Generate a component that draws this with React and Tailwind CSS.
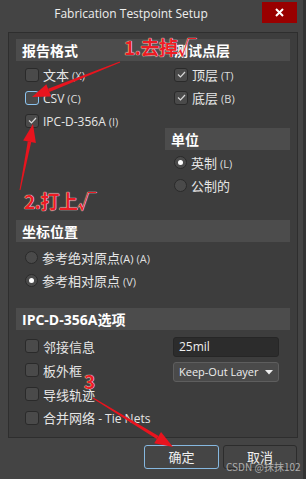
import React from "react";

const CJK = { fontFamily: '"Noto Sans CJK SC", "Noto Sans", sans-serif' };
const LAT = { fontFamily: '"Open Sans", "Noto Sans CJK SC", sans-serif' };

function Check({ checked, focus }) {
  return (
    <span
      className={
        "flex items-center justify-center w-[14px] h-[14px] rounded-[3px] bg-[#4a4a4a] border " +
        (focus ? "border-[#8cc4f0]" : "border-[#2a2a2a]")
      }
    >
      {checked && (
        <svg width="9" height="7" viewBox="0 0 9 7">
          <path d="M1 3.5 L3.5 6 L8 1" fill="none" stroke="#d8d8d8" strokeWidth="1.2" />
        </svg>
      )}
    </span>
  );
}

function Radio({ on }) {
  return (
    <span className="flex items-center justify-center w-[13px] h-[13px] rounded-full bg-[#4a4a4a] border border-[#2a2a2a]">
      {on && <span className="w-[5px] h-[5px] rounded-full bg-white" />}
    </span>
  );
}

function Row({ children, control, className = "" }) {
  return (
    <div className={"flex items-center h-[23px] gap-[4px] " + className}>
      {control}
      <span className="text-[13px] text-[#e6e6e6] leading-none whitespace-nowrap" style={CJK}>
        {children}
      </span>
    </div>
  );
}

function Key({ k }) {
  return (
    <span className="text-[11px] text-[#dcdcdc] ml-[3px]" style={LAT}>
      ({k})
    </span>
  );
}

function Header({ children, className = "" }) {
  return (
    <div
      className={"h-[22px] bg-[#4c4c4c] flex items-center pl-[6px] text-[14px] font-bold text-white " + className}
      style={CJK}
    >
      {children}
    </div>
  );
}

function Arrow({ x1, y1, x2, y2, head = 18, hw = 6.5, w = 3.5 }) {
  const dx = x2 - x1;
  const dy = y2 - y1;
  const L = Math.hypot(dx, dy);
  const ux = dx / L;
  const uy = dy / L;
  const px = -uy;
  const py = ux;
  const bx = x2 - ux * head;
  const by = y2 - uy * head;
  const shaft = [
    [x1 + px * 0.5, y1 + py * 0.5],
    [bx + px * (w / 2), by + py * (w / 2)],
    [bx - px * (w / 2), by - py * (w / 2)],
    [x1 - px * 0.5, y1 - py * 0.5],
  ];
  const tri = [
    [x2, y2],
    [bx + px * hw, by + py * hw],
    [bx - px * hw, by - py * hw],
  ];
  const s = (a) => a.map((p) => p.join(",")).join(" ");
  return (
    <g fill="#e8141e">
      <polygon points={s(shaft)} />
      <polygon points={s(tri)} />
    </g>
  );
}

const annot = {
  fontFamily: '"Noto Sans CJK SC", "Noto Sans", sans-serif',
  color: "#ec1c24",
  textShadow: "0 0 1px #fff, 0 0 1px #fff",
};

export default function App() {
  return (
    <div className="relative w-[306px] h-[479px] bg-[#444444] overflow-hidden flex flex-col border-r-[3px] border-[#333]">
      {/* title bar */}
      <div className="relative h-[32px] flex items-start">
        <div className="flex-1 h-[27px] flex items-center justify-center">
          <span className="text-[12px] text-[#eeeeee] whitespace-nowrap" style={LAT}>
            Fabrication Testpoint Setup
          </span>
        </div>
        <div className="mt-[2px] mr-[6px] w-[35px] h-[21px] bg-[#990000] flex items-center justify-center">
          <svg width="9" height="9" viewBox="0 0 9 9">
            <path d="M1 1 L8 8 M8 1 L1 8" stroke="#fff" strokeWidth="2" />
          </svg>
        </div>
      </div>

      {/* panel */}
      <div className="mx-[8px] w-[290px] h-[406px] border border-[#2e2e2e] bg-[#3d3d3d] pt-[6px] px-[7px] flex flex-col">
        <Header>
          报告格式
          <span className="ml-[96px]">测试点层</span>
        </Header>
        <div className="flex">
          <div className="w-[149px] pl-[9px] pt-[2px] flex flex-col">
            <Row control={<Check />}>
              文本<Key k="X" />
            </Row>
            <Row control={<Check focus />}>
              <span style={LAT} className="text-[12px]">CSV</span>
              <Key k="C" />
            </Row>
            <Row control={<Check checked />}>
              <span style={LAT} className="text-[12px]">IPC-D-356A</span>
              <Key k="I" />
            </Row>
          </div>
          <div className="flex-1 pt-[2px] flex flex-col">
            <div className="pl-[9px]">
              <Row control={<Check checked />}>
                顶层<Key k="T" />
              </Row>
              <Row control={<Check checked />}>
                底层<Key k="B" />
              </Row>
            </div>
            <Header className="mt-[19px]">单位</Header>
            <div className="pl-[9px] pt-[1px]">
              <Row control={<Radio on />}>
                英制<Key k="L" />
              </Row>
              <Row control={<Radio />}>公制的</Row>
            </div>
          </div>
        </div>

        <Header className="mt-[23px]">坐标位置</Header>
        <div className="pl-[9px] pt-[4px]">
          <Row control={<Radio />}>
            参考绝对原点<span style={LAT} className="text-[11px]">(A)</span>
            <Key k="A" />
          </Row>
          <Row control={<Radio on />}>
            参考相对原点<Key k="V" />
          </Row>
        </div>

        <Header className="mt-[16px]">
          <span style={LAT}>IPC-D-356A</span>选项
        </Header>
        <div className="flex pt-[4px]">
          <div className="w-[149px] pl-[9px] flex flex-col">
            <Row control={<Check />} className="h-[24px]">邻接信息</Row>
            <Row control={<Check />} className="h-[24px]">板外框</Row>
            <Row control={<Check />} className="h-[24px]">导线轨迹</Row>
            <Row control={<Check />} className="h-[24px]">
              合并网络<span style={LAT} className="text-[12px]"> - Tie Nets</span>
            </Row>
          </div>
          <div className="flex flex-col pt-[3px] pl-[8px] gap-[5px]">
            <div className="w-[106px] h-[20px] rounded-[3px] bg-[#2c2c2c] border border-[#262626] flex items-center pl-[5px]">
              <span className="text-[12px] text-[#eeeeee]" style={LAT}>25mil</span>
            </div>
            <div className="w-[106px] h-[20px] rounded-[3px] bg-[#4a4a4a] border border-[#5e5e5e] flex items-center pl-[5px] pr-[5px] justify-between">
              <span className="text-[11px] text-[#eeeeee] whitespace-nowrap" style={LAT}>Keep-Out Layer</span>
              <svg width="8" height="5" viewBox="0 0 8 5">
                <path d="M0 0 L8 0 L4 4.5 Z" fill="#eeeeee" />
              </svg>
            </div>
          </div>
        </div>
      </div>

      {/* buttons */}
      <div className="flex justify-end gap-[4px] pr-[6px] mt-[7px]">
        <div className="w-[75px] h-[24px] rounded-[3px] bg-[#454545] border border-[#86b8e0] flex items-center justify-center">
          <span className="text-[13px] text-[#f0f0f0]" style={CJK}>确定</span>
        </div>
        <div className="w-[74px] h-[24px] rounded-[3px] bg-[#454545] border border-[#2c2c2c] flex items-center justify-center">
          <span className="text-[13px] text-[#f0f0f0]" style={CJK}>取消</span>
        </div>
      </div>

      {/* annotations overlay */}
      <svg className="absolute left-0 top-0 pointer-events-none" width="306" height="479">
        <Arrow x1={120} y1={62} x2={32} y2={97} />
        <Arrow x1={20} y1={190} x2={33} y2={124} />
        <Arrow x1={93} y1={398} x2={173} y2={447} />
      </svg>
      <div className="absolute left-[124px] top-[37px] text-[19px] font-bold leading-none whitespace-nowrap tracking-[-0.5px]" style={annot}>
        1.去掉√
      </div>
      <div className="absolute left-[24px] top-[191px] text-[19px] font-bold leading-none whitespace-nowrap tracking-[-0.5px]" style={annot}>
        2.打上√
      </div>
      <div className="absolute left-[84px] top-[371px] text-[19px] font-bold leading-none" style={annot}>
        3
      </div>
      <div
        className="absolute left-[226px] top-[462px] text-[10px] text-[#c8c8c8] opacity-80 leading-none whitespace-nowrap"
        style={{ fontFamily: '"Noto Sans CJK SC", sans-serif' }}
      >
        CSDN @抹抹102
      </div>
    </div>
  );
}
